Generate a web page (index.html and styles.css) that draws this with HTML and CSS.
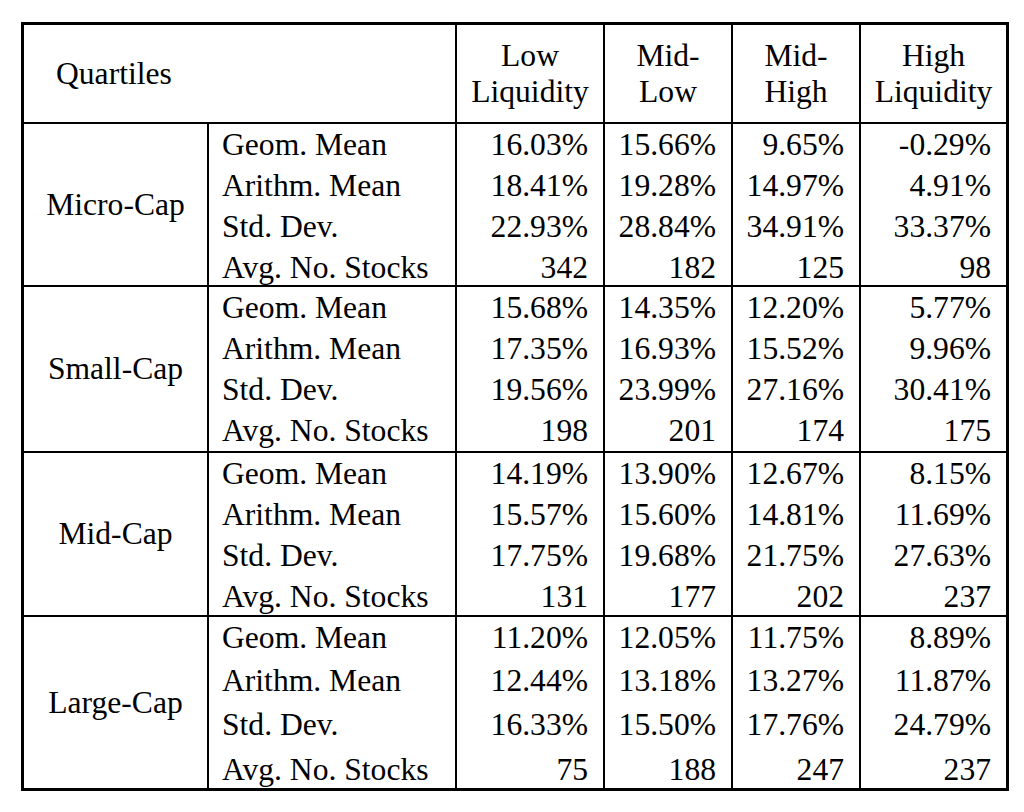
FILE: index.html
```html
<!DOCTYPE html>
<html lang="en">
<head>
<meta charset="utf-8">
<title>Liquidity Quartiles</title>
<link rel="stylesheet" href="styles.css">
</head>
<body>
<table class="qt">
  <colgroup>
    <col class="c-group">
    <col class="c-stat">
    <col class="c-low">
    <col class="c-midlow">
    <col class="c-midhigh">
    <col class="c-high">
  </colgroup>
  <thead>
    <tr class="head">
      <th colspan="2" class="quart">Quartiles</th>
      <th class="hd">Low<br>Liquidity</th>
      <th class="hd">Mid-<br>Low</th>
      <th class="hd">Mid-<br>High</th>
      <th class="hd last">High<br>Liquidity</th>
    </tr>
  </thead>
  <tbody>
    <tr class="h41">
      <th rowspan="4" class="grp end">Micro-Cap</th>
      <td class="stat">Geom. Mean</td>
      <td class="num">16.03%</td><td class="num">15.66%</td><td class="num">9.65%</td><td class="num last">-0.29%</td>
    </tr>
    <tr class="h41">
      <td class="stat">Arithm. Mean</td>
      <td class="num">18.41%</td><td class="num">19.28%</td><td class="num">14.97%</td><td class="num last">4.91%</td>
    </tr>
    <tr class="h41">
      <td class="stat">Std. Dev.</td>
      <td class="num">22.93%</td><td class="num">28.84%</td><td class="num">34.91%</td><td class="num last">33.37%</td>
    </tr>
    <tr class="h40 end">
      <td class="stat">Avg. No. Stocks</td>
      <td class="num">342</td><td class="num">182</td><td class="num">125</td><td class="num last">98</td>
    </tr>

    <tr class="h41">
      <th rowspan="4" class="grp end">Small-Cap</th>
      <td class="stat">Geom. Mean</td>
      <td class="num">15.68%</td><td class="num">14.35%</td><td class="num">12.20%</td><td class="num last">5.77%</td>
    </tr>
    <tr class="h41">
      <td class="stat">Arithm. Mean</td>
      <td class="num">17.35%</td><td class="num">16.93%</td><td class="num">15.52%</td><td class="num last">9.96%</td>
    </tr>
    <tr class="h41">
      <td class="stat">Std. Dev.</td>
      <td class="num">19.56%</td><td class="num">23.99%</td><td class="num">27.16%</td><td class="num last">30.41%</td>
    </tr>
    <tr class="h43 end">
      <td class="stat">Avg. No. Stocks</td>
      <td class="num">198</td><td class="num">201</td><td class="num">174</td><td class="num last">175</td>
    </tr>

    <tr class="h41">
      <th rowspan="4" class="grp end">Mid-Cap</th>
      <td class="stat">Geom. Mean</td>
      <td class="num">14.19%</td><td class="num">13.90%</td><td class="num">12.67%</td><td class="num last">8.15%</td>
    </tr>
    <tr class="h41">
      <td class="stat">Arithm. Mean</td>
      <td class="num">15.57%</td><td class="num">15.60%</td><td class="num">14.81%</td><td class="num last">11.69%</td>
    </tr>
    <tr class="h41">
      <td class="stat">Std. Dev.</td>
      <td class="num">17.75%</td><td class="num">19.68%</td><td class="num">21.75%</td><td class="num last">27.63%</td>
    </tr>
    <tr class="h41 end">
      <td class="stat">Avg. No. Stocks</td>
      <td class="num">131</td><td class="num">177</td><td class="num">202</td><td class="num last">237</td>
    </tr>

    <tr class="h43">
      <th rowspan="4" class="grp">Large-Cap</th>
      <td class="stat">Geom. Mean</td>
      <td class="num">11.20%</td><td class="num">12.05%</td><td class="num">11.75%</td><td class="num last">8.89%</td>
    </tr>
    <tr class="h44">
      <td class="stat">Arithm. Mean</td>
      <td class="num">12.44%</td><td class="num">13.18%</td><td class="num">13.27%</td><td class="num last">11.87%</td>
    </tr>
    <tr class="h45">
      <td class="stat">Std. Dev.</td>
      <td class="num">16.33%</td><td class="num">15.50%</td><td class="num">17.76%</td><td class="num last">24.79%</td>
    </tr>
    <tr class="h39 final">
      <td class="stat">Avg. No. Stocks</td>
      <td class="num">75</td><td class="num">188</td><td class="num">247</td><td class="num last">237</td>
    </tr>
  </tbody>
</table>
</body>
</html>
```

FILE: styles.css
```css
html, body {
  margin: 0;
  padding: 0;
  background: #ffffff;
}

body {
  font-family: "Liberation Serif", "Times New Roman", serif;
  font-size: 31.6px;
  color: #000000;
}

.qt {
  margin: 22px 0 0 21px;
  width: 988px;
  table-layout: fixed;
  border-collapse: separate;
  border-spacing: 0;
  border: 3px solid #000000;
}

.c-group { width: 185px; }
.c-stat { width: 248px; }
.c-low { width: 148px; }
.c-midlow { width: 128px; }
.c-midhigh { width: 128px; }
.c-high { width: 145px; }

.qt th,
.qt td {
  padding: 0;
  font-weight: normal;
  box-sizing: border-box;
}

.head { height: 99px; }

.head th {
  border-bottom: 2px solid #000000;
  vertical-align: middle;
  line-height: 36px;
}

.quart {
  text-align: left;
  padding-left: 32px !important;
  border-right: 2px solid #000000;
}

.hd {
  text-align: center;
  border-right: 2px solid #000000;
}

.hd.last { border-right: none; }

.grp {
  text-align: center;
  vertical-align: middle;
  line-height: 34px;
  border-right: 2px solid #000000;
}

.grp.end { border-bottom: 2px solid #000000; }

.stat,
.num {
  vertical-align: top;
  line-height: 34px;
  padding-top: 4px !important;
  white-space: nowrap;
  border-right: 2px solid #000000;
}

.stat {
  text-align: left;
  padding-left: 13px !important;
}

.num {
  text-align: right;
  padding-right: 15px !important;
}

.num.last { border-right: none; }

.end td { border-bottom: 2px solid #000000; }

.h39 { height: 39px; }
.h40 { height: 40px; }
.h41 { height: 41px; }
.h43 { height: 43px; }
.h44 { height: 44px; }
.h45 { height: 45px; }
```
